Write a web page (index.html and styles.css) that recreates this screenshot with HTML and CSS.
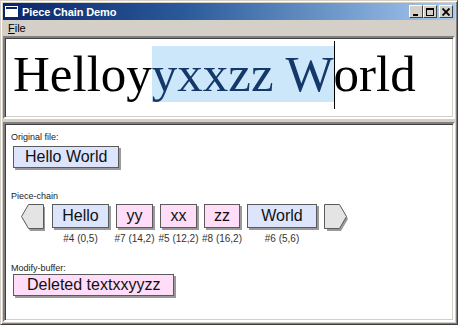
FILE: index.html
```html
<!DOCTYPE html>
<html>
<head>
<title>Piece Chain Demo</title>
<link rel="stylesheet" href="styles.css">
</head>
<body>
<div class="window">
  <div class="titlebar">
    <svg class="app-icon" width="13" height="11" viewBox="0 0 13 11">
      <rect x="0.5" y="0.5" width="12" height="10" fill="#fff" stroke="#fff"/>
      <rect x="1" y="1" width="11" height="2" fill="#0a246a"/>
    </svg>
    <span class="title">Piece Chain Demo</span>
    <div class="caption-buttons">
      <div class="cbtn">
        <svg width="8" height="8" viewBox="0 0 8 8"><rect x="1" y="6" width="5" height="2" fill="#000"/></svg>
      </div>
      <div class="cbtn">
        <svg width="8" height="8" viewBox="0 0 8 8"><rect x="0.5" y="0.5" width="7" height="7" fill="none" stroke="#000"/><rect x="0" y="0" width="8" height="2" fill="#000"/></svg>
      </div>
      <div class="cbtn close">
        <svg width="8" height="8" viewBox="0 0 8 8"><path d="M0.5 0.5 L7.5 7.5 M7.5 0.5 L0.5 7.5" stroke="#000" stroke-width="1.8"/></svg>
      </div>
    </div>
  </div>

  <div class="menubar">
    <span class="menu-item"><u>F</u>ile</span>
  </div>

  <div class="pane pane-top">
    <div class="big-text">Helloy<span class="sel">yxxzz W</span><span class="caret"></span>orld</div>
  </div>

  <div class="pane pane-bottom">
    <div class="label">Original file:</div>
    <div class="piece blue big-piece">Hello World</div>

    <div class="label chain-label">Piece-chain</div>
    <div class="chain">
      <svg class="arrow" width="25" height="27" viewBox="0 0 25 27">
        <polygon points="9,3 24,3 24,27 9,27 2,15" fill="#9a9a9a"/>
        <polygon points="7.5,0.5 22.5,0.5 22.5,24.5 7.5,24.5 0.5,12.5" fill="#e4e4e4" stroke="#5a5a5a"/>
      </svg>
      <div class="node w-hello">
        <div class="piece blue">Hello</div>
        <div class="node-info">#4 (0,5)</div>
      </div>
      <div class="node w-yy">
        <div class="piece pink">yy</div>
        <div class="node-info">#7 (14,2)</div>
      </div>
      <div class="node w-xx">
        <div class="piece pink">xx</div>
        <div class="node-info">#5 (12,2)</div>
      </div>
      <div class="node w-zz">
        <div class="piece pink">zz</div>
        <div class="node-info">#8 (16,2)</div>
      </div>
      <div class="node w-world">
        <div class="piece blue">World</div>
        <div class="node-info">#6 (5,6)</div>
      </div>
      <svg class="arrow" width="25" height="27" viewBox="0 0 25 27">
        <polygon points="3,3 17,3 24,15 17,27 3,27" fill="#9a9a9a"/>
        <polygon points="0.5,0.5 15.5,0.5 22.5,12.5 15.5,24.5 0.5,24.5" fill="#e4e4e4" stroke="#5a5a5a"/>
      </svg>
    </div>

    <div class="label modify-label">Modify-buffer:</div>
    <div class="piece pink big-piece">Deleted textxxyyzz</div>
  </div>
</div>
</body>
</html>
```

FILE: styles.css
```css
body {
  margin: 0;
  padding: 0;
  background-color: #d4d0c8;
  font-family: "Liberation Sans", Arial, sans-serif;
}

.window {
  width: 458px;
  height: 325px;
  box-sizing: border-box;
  background-color: #d4d0c8;
  border: 1px solid;
  border-color: #d4d0c8 #404040 #404040 #d4d0c8;
  box-shadow: inset 1px 1px 0 #fff, inset -1px -1px 0 #808080;
  padding: 2px;
  display: flex;
  flex-direction: column;
}

.titlebar {
  height: 17px;
  flex: none;
  display: flex;
  align-items: center;
  background: linear-gradient(to right, #0a246a 0%, #2a5a9a 40%, #a6caf0 100%);
  padding: 0 2px 0 2px;
}

.app-icon {
  margin-right: 4px;
}

.title {
  color: #fff;
  font-size: 11px;
  font-weight: bold;
  letter-spacing: -0.1px;
}

.caption-buttons {
  margin-left: auto;
  display: flex;
}

.cbtn {
  width: 12px;
  height: 11px;
  background-color: #d4d0c8;
  border: 1px solid;
  border-color: #fff #404040 #404040 #fff;
  display: flex;
  align-items: center;
  justify-content: center;
}

.cbtn.close {
  margin-left: 2px;
}

.menubar {
  height: 16px;
  flex: none;
  display: flex;
  align-items: center;
  padding-left: 5px;
}

.menu-item {
  font-size: 11px;
  color: #000;
}

.pane {
  background-color: #fff;
  border: 2px solid;
  border-color: #808080 #fff #fff #808080;
  box-shadow: inset 1px 1px 0 #404040, inset -1px -1px 0 #d4d0c8;
  overflow: hidden;
}

.pane-top {
  height: 79px;
  flex: none;
  margin-bottom: 3px;
}

.big-text {
  font-family: "Liberation Serif", "Times New Roman", serif;
  font-size: 51px;
  line-height: 60px;
  padding: 6px 0 0 8px;
  white-space: nowrap;
  color: #000;
}

.sel {
  background-color: #cbe7f9;
  color: #15386a;
}

.caret {
  display: inline-block;
  width: 1px;
  height: 68px;
  margin-top: -20px;
  margin-right: -1px;
  vertical-align: -18px;
  background-color: #000;
}

.pane-bottom {
  flex: 1;
  padding: 7px 0 0 6px;
}

.label {
  font-size: 9px;
  line-height: 12px;
  color: #222;
}

.piece {
  box-sizing: border-box;
  border: 1px solid #5a5a5a;
  box-shadow: 2px 2px 0 #9a9a9a;
  font-size: 16px;
  color: #111;
  text-align: center;
}

.blue {
  background-color: #dde5fc;
}

.pink {
  background-color: #ffddf8;
}

.big-piece {
  display: inline-block;
  height: 22px;
  line-height: 20px;
  padding: 0 11px;
  margin: 3px 0 0 2px;
}

.chain-label {
  margin-top: 22px;
}

.chain {
  display: flex;
  align-items: flex-start;
  gap: 7px;
  margin: 2px 0 0 10px;
}

.arrow {
  flex: none;
}

.arrow:first-child {
  margin-right: -1px;
}

.node {
  display: flex;
  flex-direction: column;
  align-items: center;
  flex: none;
}

.node .piece {
  width: 100%;
  height: 24px;
  line-height: 22px;
}

.node-info {
  margin-top: 5px;
  font-size: 10px;
  line-height: 12px;
  color: #333;
  white-space: nowrap;
}

.w-hello { width: 57px; }
.w-yy { width: 37px; }
.w-xx { width: 37px; }
.w-zz { width: 36px; }
.w-world { width: 70px; }

.modify-label {
  margin-top: 17px;
}

.modify-label + .big-piece {
  margin-top: 0;
  padding: 0 13px;
}
```
